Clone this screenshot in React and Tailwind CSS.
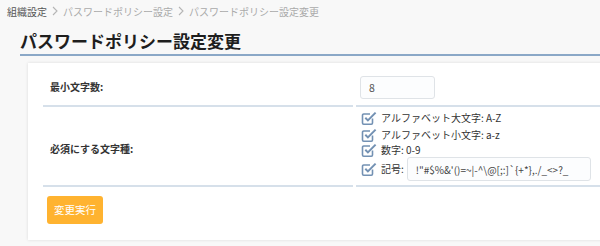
import React from "react";

function Chevron() {
  return (
    <svg width="8" height="10" viewBox="0 0 8 10" className="mx-[4px]">
      <path d="M2 1 L6 5 L2 9" fill="none" stroke="#b5b5b5" strokeWidth="1.1" />
    </svg>
  );
}

function CheckIcon() {
  return (
    <svg width="16" height="16" viewBox="0 0 16 16" className="shrink-0">
      <path
        d="M11.5 8.5 V13 a1.2 1.2 0 0 1 -1.2 1.2 H2.7 a1.2 1.2 0 0 1 -1.2 -1.2 V5.2 a1.2 1.2 0 0 1 1.2 -1.2 H9"
        fill="none"
        stroke="#7391b3"
        strokeWidth="1.6"
        strokeLinejoin="round"
      />
      <path
        d="M4.3 7.8 L6.9 10.4 L14.6 2.6"
        fill="none"
        stroke="#7391b3"
        strokeWidth="2"
        strokeLinejoin="miter"
      />
    </svg>
  );
}

function CheckItem({ children, className }) {
  return (
    <div className={"flex items-center gap-[4px] text-[10px] text-[#333] " + className}>
      <CheckIcon />
      <span className="leading-none">{children}</span>
    </div>
  );
}

export default function App() {
  return (
    <div className="w-[600px] h-[246px] overflow-hidden bg-[#f8f8f8] font-['Noto_Sans_CJK_JP',sans-serif]">
      <div className="h-[22px] flex items-center pl-[7px] text-[10px] whitespace-nowrap">
        <span className="text-[#555]">組織設定</span>
        <Chevron />
        <span className="text-[#aaa]">パスワードポリシー設定</span>
        <Chevron />
        <span className="text-[#aaa]">パスワードポリシー設定変更</span>
      </div>
      <div className="ml-[20px] pt-[8px] pb-[2px] border-b-2 border-[#8ba8c7]">
        <h1 className="text-[17px] leading-[22px] font-bold text-[#1e1e1e] whitespace-nowrap">
          パスワードポリシー設定変更
        </h1>
      </div>
      <div className="ml-[28px] mt-[7px] w-[620px] bg-white px-[15px] shadow-[0_0_3px_rgba(0,0,0,0.12)]">
        <table className="w-full border-separate border-spacing-x-[3px] border-spacing-y-0 -mx-[3px]">
          <tbody>
            <tr>
              <td className="w-[310px] align-middle pl-[7px] border-b-2 border-[#d6e0ea]">
                <span className="text-[10px] font-bold text-[#333]">最小文字数:</span>
              </td>
              <td className="border-b-2 border-[#d6e0ea] pt-[13px] pb-[6px] pl-[4px]">
                <div className="w-[75px] h-[23px] border border-[#dfe3e7] rounded-[3px] bg-[#fcfdfe] flex items-center pl-[8px] text-[10.5px] text-[#555]">
                  8
                </div>
              </td>
            </tr>
            <tr>
              <td className="w-[310px] align-middle pl-[7px] border-b-2 border-[#d6e0ea]">
                <span className="text-[10px] font-bold text-[#333]">必須にする文字種:</span>
              </td>
              <td className="border-b-2 border-[#d6e0ea] pt-[3px] pb-[4px] pl-[5px]">
                <CheckItem className="h-[16px]">アルファベット大文字: A-Z</CheckItem>
                <CheckItem className="h-[16px] mt-[1px]">アルファベット小文字: a-z</CheckItem>
                <CheckItem className="h-[14px]">数字: 0-9</CheckItem>
                <div className="flex items-center gap-[4px] h-[24px] text-[10px] text-[#333]">
                  <CheckIcon />
                  <span className="leading-none">記号:</span>
                  <div className="ml-[-1px] w-[184px] h-[24px] border border-[#dfe3e7] rounded-[3px] bg-[#fcfdfe] flex items-center pl-[8px] text-[10px] text-[#444] whitespace-nowrap">
                    {"!\"#$%&'()=~|-^\\@[;:]`{+*},./_<>?_"}
                  </div>
                </div>
              </td>
            </tr>
          </tbody>
        </table>
        <div className="pt-[8px] pb-[16px] pl-[4px]">
          <button className="w-[56px] h-[28px] rounded-[3px] bg-[#ffb330] text-white text-[10.5px]">
            変更実行
          </button>
        </div>
      </div>
    </div>
  );
}
